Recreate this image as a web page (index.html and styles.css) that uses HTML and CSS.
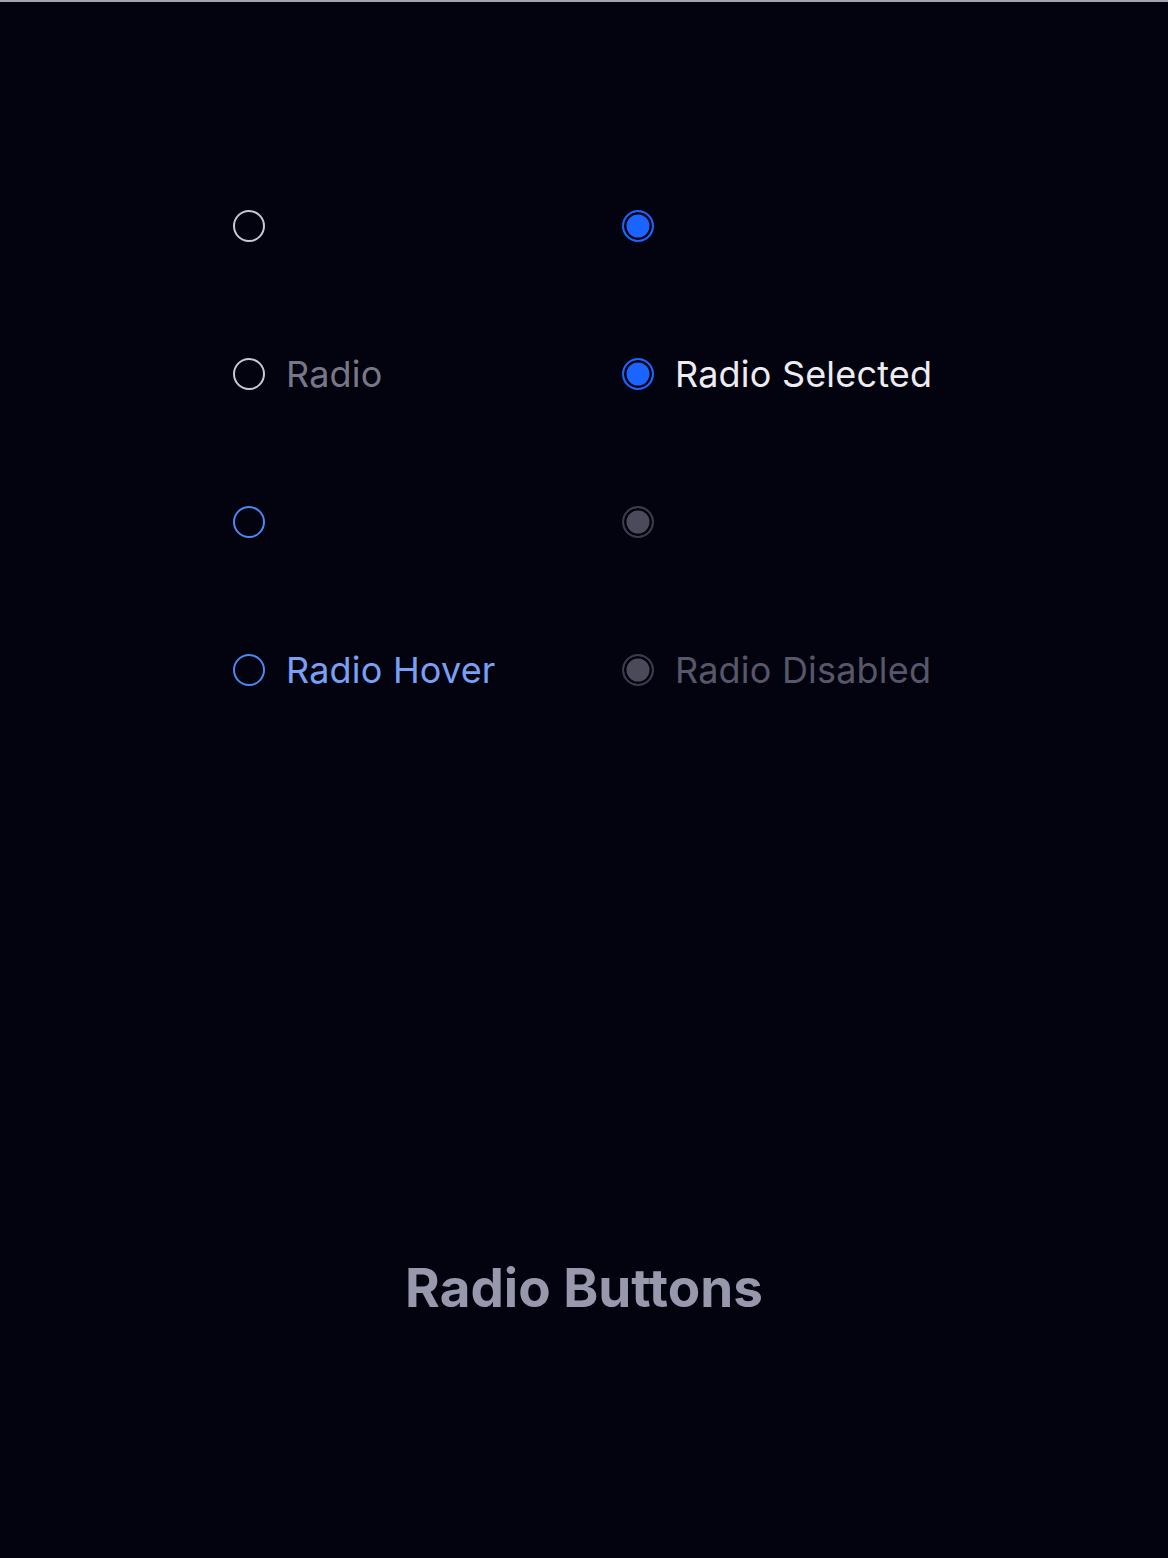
FILE: index.html
```html
<!DOCTYPE html>
<html lang="en">
<head>
<meta charset="utf-8">
<title>Radio Buttons</title>
<link rel="stylesheet" href="styles.css">
</head>
<body>
<div class="page">
  <div class="grid">
    <div class="item"><span class="radio radio-default"></span></div>
    <div class="item"><span class="radio radio-selected"></span></div>
    <div class="item"><span class="radio radio-default"></span><span class="label label-default">Radio</span></div>
    <div class="item"><span class="radio radio-selected"></span><span class="label label-selected">Radio Selected</span></div>
    <div class="item"><span class="radio radio-hover"></span></div>
    <div class="item"><span class="radio radio-disabled"></span></div>
    <div class="item"><span class="radio radio-hover"></span><span class="label label-hover">Radio Hover</span></div>
    <div class="item"><span class="radio radio-disabled"></span><span class="label label-disabled">Radio Disabled</span></div>
  </div>
  <h1 class="title">Radio Buttons</h1>
</div>
</body>
</html>
```
FILE: styles.css
```css
html, body {
  margin: 0;
  padding: 0;
  background: #03030f;
}
body {
  font-family: "Inter", "Noto Sans", sans-serif;
  border-top: 2px solid #a4a4ac;
  min-height: 1556px;
  box-sizing: border-box;
}
.page {
  display: flex;
  flex-direction: column;
}
.grid {
  display: grid;
  grid-template-columns: 389px 389px;
  grid-auto-rows: 148px;
  padding: 150px 0 0 233px;
}
.item {
  display: flex;
  align-items: center;
  gap: 21px;
  height: 148px;
}
.radio {
  width: 32px;
  height: 32px;
  box-sizing: border-box;
  border-radius: 50%;
  flex: none;
}
.radio-default {
  border: 2px solid #c9c9d1;
}
.radio-hover {
  border: 2px solid #4a88f2;
}
.radio-selected {
  border: 2px solid #1c64ff;
  background: #1c64ff;
  box-shadow: inset 0 0 0 2.5px #03030f;
}
.radio-disabled {
  border: 2px solid #3a3a48;
  background: #4a4a5a;
  box-shadow: inset 0 0 0 2.5px #03030f;
}
.label {
  font-size: 36px;
  letter-spacing: 0.2px;
  line-height: 1;
}
.label-default { color: #777789; }
.label-selected { color: #ececf2; }
.label-hover { color: #78a0f4; }
.label-disabled { color: #57576a; }
.title {
  margin: 0;
  margin-top: 518px;
  text-align: center;
  font-size: 53px;
  font-weight: 700;
  color: #9898ac;
  line-height: 1;
}
```
